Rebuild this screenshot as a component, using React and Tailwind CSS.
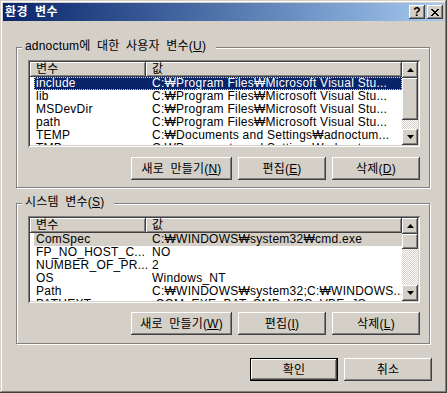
const RAISED =
  'shadow-[inset_-1px_-1px_#404040,inset_1px_1px_#ffffff,inset_-2px_-2px_#808080,inset_2px_2px_#d4d0c8]'
const SUNKEN =
  'shadow-[inset_1px_1px_#808080,inset_-1px_-1px_#ffffff,inset_2px_2px_#404040,inset_-2px_-2px_#d4d0c8]'
const HEADER = 'shadow-[inset_-1px_-1px_#404040,inset_1px_1px_#ffffff,inset_-2px_-2px_#808080]'
const CHECKER = 'bg-[repeating-conic-gradient(#ffffff_0_25%,#d4d0c8_0_50%)] bg-[length:2px_2px]'

const userVars = [
  ['include', 'C:₩Program Files₩Microsoft Visual Stu...'],
  ['lib', 'C:₩Program Files₩Microsoft Visual Stu...'],
  ['MSDevDir', 'C:₩Program Files₩Microsoft Visual Stu...'],
  ['path', 'C:₩Program Files₩Microsoft Visual Stu...'],
  ['TEMP', 'C:₩Documents and Settings₩adnoctum...'],
  ['TMP', 'C:₩Documents and Settings₩adnoctum...'],
]

const sysVars = [
  ['ComSpec', 'C:₩WINDOWS₩system32₩cmd.exe'],
  ['FP_NO_HOST_C...', 'NO'],
  ['NUMBER_OF_PR...', '2'],
  ['OS', 'Windows_NT'],
  ['Path', 'C:₩WINDOWS₩system32;C:₩WINDOWS...'],
  ['PATHEXT', '.COM;.EXE;.BAT;.CMD;.VBS;.VBE;.JS...'],
]

function Key({ children }) {
  return <span className="underline underline-offset-[1px]">{children}</span>
}

function Arrow({ down }) {
  return (
    <svg width="7" height="4" viewBox="0 0 7 4" className={down ? 'rotate-180' : ''}>
      <polygon points="3.5,0 7,4 0,4" fill="#000" />
    </svg>
  )
}

function ScrollBar({ thumb, track }) {
  return (
    <div className="w-[16px] flex flex-col shrink-0">
      <div className={`h-[16px] flex items-center justify-center bg-[#d4d0c8] ${RAISED}`}>
        <Arrow />
      </div>
      <div className={`bg-[#d4d0c8] ${RAISED}`} style={{ height: thumb }} />
      <div className={CHECKER} style={{ height: track }} />
      <div className={`h-[16px] flex items-center justify-center bg-[#d4d0c8] ${RAISED}`}>
        <Arrow down />
      </div>
    </div>
  )
}

function VarList({ rows, active, thumb, track }) {
  return (
    <div className={`w-[392px] h-[87px] bg-white p-[2px] flex ${SUNKEN}`}>
      <div className="flex-1 flex flex-col overflow-hidden">
        <div className="flex h-[15px] shrink-0 bg-[#d4d0c8] leading-[15px]">
          <div className={`w-[116px] pl-[6px] ${HEADER}`}>변수</div>
          <div className={`flex-1 pl-[6px] ${HEADER}`}>값</div>
        </div>
        {rows.map(([name, value], i) => {
          let cls = ''
          if (i === 0 && active)
            cls = 'bg-[#0a246a] text-white outline outline-1 outline-dotted outline-[#e8dca0] -outline-offset-1'
          else if (i === 0) cls = 'bg-[#d4d0c8]'
          return (
            <div
              key={name}
              className={`flex h-[13px] shrink-0 ml-[4px] leading-[13px] whitespace-nowrap tracking-[0.25px] ${cls}`}
            >
              <div className="w-[116px] pl-[2px] overflow-hidden">{name}</div>
              <div className="flex-1 pl-[2px] overflow-hidden">{value}</div>
            </div>
          )
        })}
      </div>
      <ScrollBar thumb={thumb} track={track} />
    </div>
  )
}

function Button({ children, w = 'w-[88px]', isDefault }) {
  return (
    <div
      className={`${w} h-[23px] flex items-center justify-center bg-[#d4d0c8] [word-spacing:3px] ${
        isDefault
          ? 'border border-black shadow-[inset_-1px_-1px_#404040,inset_1px_1px_#ffffff,inset_-2px_-2px_#808080]'
          : RAISED
      }`}
    >
      {children}
    </div>
  )
}

function Group({ label, children }) {
  return (
    <div className="relative w-[414px] h-[141px] border border-[#808080] shadow-[1px_1px_0_#ffffff,inset_1px_1px_0_#ffffff] pl-[11px] pr-[9px] pt-[12px]">
      <div className="absolute -top-[9px] left-[5px] pl-[3px] pr-[10px] bg-[#d4d0c8] leading-[14px] [word-spacing:3px]">
        {label}
      </div>
      {children}
    </div>
  )
}

function Buttons({ n, e, d, mt }) {
  return (
    <div className={`flex justify-end gap-[6px] ${mt}`}>
      <Button w="w-[101px]">
        새로 만들기(<Key>{n}</Key>)
      </Button>
      <Button>
        편집(<Key>{e}</Key>)
      </Button>
      <Button>
        삭제(<Key>{d}</Key>)
      </Button>
    </div>
  )
}

export default function App() {
  return (
    <div className="w-[447px] h-[393px] bg-[#d4d0c8] p-[3px] flex flex-col text-[12px] tracking-[0.2px] text-black font-['Liberation_Sans','Noto_Sans_CJK_KR',sans-serif] shadow-[inset_-1px_-1px_#404040,inset_1px_1px_#d4d0c8,inset_-2px_-2px_#808080,inset_2px_2px_#ffffff]">
      {/* Title bar */}
      <div className="h-[18px] shrink-0 flex items-center justify-between pl-[2px] pr-[1px] bg-linear-to-r from-[#0a246a] to-[#a6caf0]">
        <span className="text-white font-bold text-[12px] tracking-[0.5px] [word-spacing:3px]">환경 변수</span>
        <div className="flex gap-[2px]">
          <div className={`w-[16px] h-[14px] flex items-center justify-center bg-[#d4d0c8] font-bold text-[12px] leading-none ${RAISED}`}>
            ?
          </div>
          <div className={`w-[16px] h-[14px] flex items-center justify-center bg-[#d4d0c8] ${RAISED}`}>
            <svg width="8" height="7" viewBox="0 0 8 7">
              <path d="M0 0h2v1h1v1h2V1h1V0h2v1H7v1H6v1H5v1h1v1h1v1h1v1H6V6H5V5H3v1H2v1H0V6h1V5h1V4h1V3H2V2H1V1H0z" fill="#000" />
            </svg>
          </div>
        </div>
      </div>

      <div className="flex flex-col pl-[13px]">
        <div className="mt-[26px]">
          <Group
            label={
              <>
                adnoctum에 대한 사용자 변수(<Key>U</Key>)
              </>
            }
          >
            <VarList rows={userVars} active thumb={42} track={9} />
            <Buttons n="N" e="E" d="D" mt="mt-[10px]" />
          </Group>
        </div>

        <div className="mt-[15px]">
          <Group
            label={
              <>
                시스템 변수(<Key>S</Key>)
              </>
            }
          >
            <VarList rows={sysVars} thumb={15} track={36} />
            <Buttons n="W" e="I" d="L" mt="mt-[9px]" />
          </Group>
        </div>

        <div className="flex justify-end gap-[6px] mt-[14px] pr-[12px]">
          <Button isDefault>확인</Button>
          <Button>취소</Button>
        </div>
      </div>
    </div>
  )
}
